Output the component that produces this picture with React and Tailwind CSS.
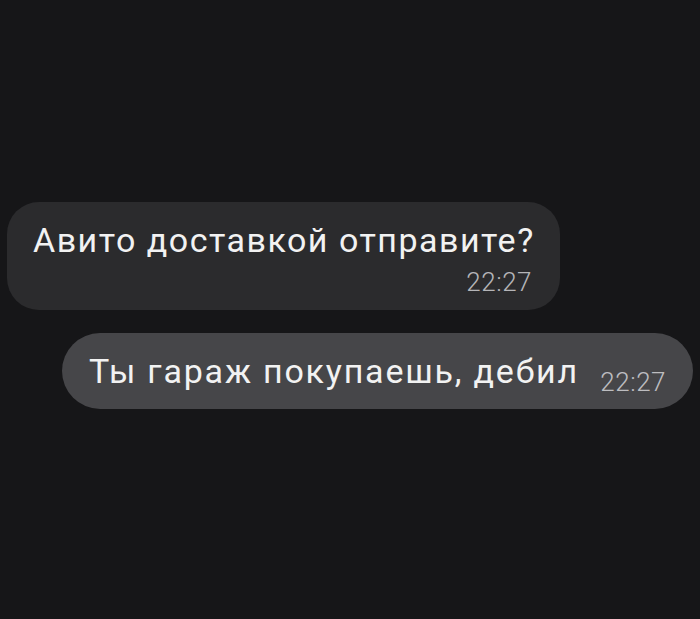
export default function App() {
  return (
    <div className="w-[700px] h-[619px] bg-[#161618] flex flex-col pt-[202px] px-[7px]" style={{ fontFamily: 'Roboto, "Noto Sans", sans-serif' }}>
      <div className="self-start w-[553px] h-[108px] rounded-[32px] bg-[#2b2b2d] pl-[26px] pr-[28px] pt-[14px] flex flex-col">
        <div className="whitespace-nowrap text-[34px] leading-[48px] text-[#f2f2f2] tracking-[1.5px]">Авито доставкой отправите?</div>
        <div className="self-end whitespace-nowrap text-[26px] leading-[28px] font-light tracking-[0.5px] text-[#b5b5b8] mt-[4px]">22:27</div>
      </div>
      <div className="self-end mt-[23px] w-[631px] h-[76px] rounded-full bg-[#464649] pl-[27px] pr-[27px] flex items-center">
        <div className="whitespace-nowrap text-[34px] leading-[48px] text-[#f2f2f2] tracking-[1.8px]">Ты гараж покупаешь, дебил</div>
        <div className="ml-auto whitespace-nowrap text-[26px] leading-[28px] font-light tracking-[0.5px] text-[#bdbdc0] mt-[22px]">22:27</div>
      </div>
    </div>
  );
}
